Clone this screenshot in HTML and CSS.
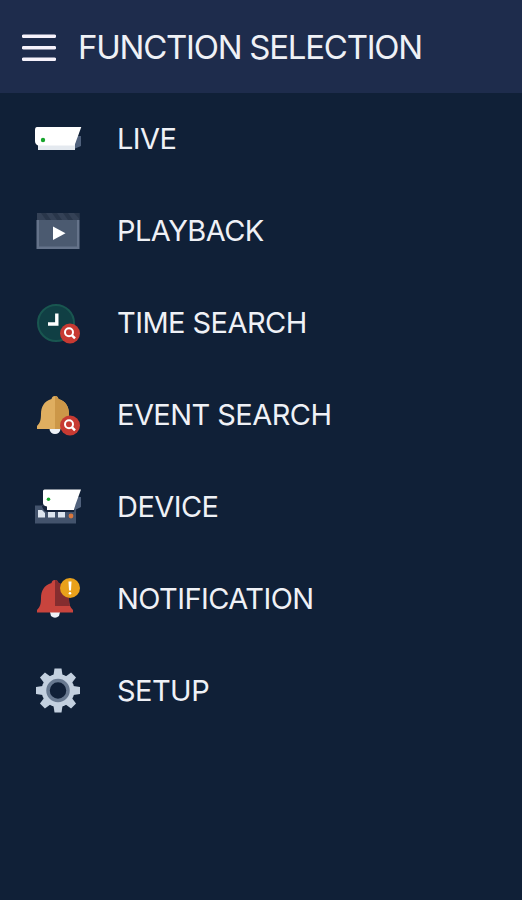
FILE: index.html
```html
<!DOCTYPE html>
<html lang="en">
<head>
    <meta charset="UTF-8">
    <title>Function selection</title>
    <link rel="stylesheet" href="styles.css">
</head>
<body>

<header class="topbar">
    <svg class="menu-btn" width="34" height="30" viewBox="0 0 34 30">
        <path d="M1.5 3.2H32.5M1.5 14.800H32.5M1.5 26.3H32.5" stroke="#f6f2fb" stroke-width="3.4" stroke-linecap="round"/>
    </svg>
    <h1 class="title">FUNCTION SELECTION</h1>
</header>

<ul class="menu">
    <li class="item">
        <svg class="icon" viewBox="0 0 52 52">
            <path d="M42 23H49V33L42 36Z" fill="#50617c"/>
            <path d="M6 31H43V37H6Z" fill="#e4e9ef"/>
            <path d="M5 14H49.3L42.5 32.5H6Q3 31 3 28V17Q3 14 5 14Z" fill="#fff"/>
            <circle cx="11" cy="27" r="2.2" fill="#18a52d"/>
        </svg>
        <span>LIVE</span>
    </li>
    <li class="item">
        <svg class="icon" viewBox="0 0 52 52">
            <path d="M5 8H47.5V15H5Z" fill="#344156"/>
            <path d="M9 8H14L19 15H14ZM20 8H25L30 15H25ZM31 8H36L41 15H36ZM42 8H47L47.5 14Z" fill="#29364a"/>
            <path d="M4.5 15H47.5V44H4.5Z" fill="#65738a"/>
            <path d="M7 15H45V41.5H7Z" fill="#4b5a70"/>
            <path d="M21 21.5L33.5 28.3L21 35Z" fill="#fff"/>
        </svg>
        <span>PLAYBACK</span>
    </li>
    <li class="item">
        <svg class="icon" viewBox="0 0 52 52">
            <circle cx="24" cy="26" r="18" fill="#103f44" stroke="#195650" stroke-width="2"/>
            <path d="M24.8 16.5V27H16" fill="none" stroke="#fff" stroke-width="3.4"/>
            <circle cx="38" cy="36.5" r="10" fill="#c73a32"/>
            <circle cx="37" cy="35.3" r="4" fill="none" stroke="#fff" stroke-width="2"/>
            <path d="M40 38.3L43 41.3" stroke="#fff" stroke-width="2.4"/>
        </svg>
        <span>TIME SEARCH</span>
    </li>
    <li class="item">
        <svg class="icon" viewBox="0 0 52 52">
            <circle cx="23" cy="39.5" r="5.5" fill="#edf1f7"/>
            <path d="M23 7C20.5 7 19.8 8.5 19.5 10C12 12 9 18 9 25C9 31 8 34 5 37V40H41V37C38 34 37 31 37 25C37 18 34 12 26.5 10C26.2 8.5 25.5 7 23 7Z" fill="#dfae60"/>
            <path d="M23 7C25.5 7 26.2 8.5 26.5 10C34 12 37 18 37 25C37 31 38 34 41 37V40H23Z" fill="#cc9748"/>
            <circle cx="38" cy="36.5" r="10" fill="#c73a32"/>
            <circle cx="37" cy="35.3" r="4" fill="none" stroke="#fff" stroke-width="2"/>
            <path d="M40 38.3L43 41.3" stroke="#fff" stroke-width="2.4"/>
        </svg>
        <span>EVENT SEARCH</span>
    </li>
    <li class="item">
        <svg class="icon" viewBox="0 0 52 52">
            <path d="M3 24.5H44V42.5H3Z" fill="#43536c"/>
            <path d="M6 29H10L13 32V36.5H6ZM16 31H23V36.5H16ZM26 31H33V36.5H26Z" fill="#dce4ee"/>
            <circle cx="39" cy="35" r="2.4" fill="#d9773d"/>
            <path d="M42 16H49V26L43 29Z" fill="#50617c"/>
            <path d="M10 25H43L42 31H15Q11 30 10 25Z" fill="#142239"/>
            <path d="M12.5 8.5H49L43.5 23.5L42 29H15V25.5Q11 24.5 11 22V10Q11 8.5 12.5 8.5Z" fill="#fff"/>
            <circle cx="16.5" cy="18.3" r="1.8" fill="#18a52d"/>
        </svg>
        <span>DEVICE</span>
    </li>
    <li class="item">
        <svg class="icon" viewBox="0 0 52 52">
            <path d="M18 39H28L27 43Q23 46.5 19 43Z" fill="#edf1f7"/>
            <path d="M23 7C20.5 7 19.8 8.5 19.5 10C12 12 9 18 9 25C9 31 8 34 5 37V39.5H41V37C38 34 37 31 37 25C37 18 34 12 26.5 10C26.2 8.5 25.5 7 23 7Z" fill="#c8443d"/>
            <path d="M23 7C25.5 7 26.2 8.5 26.5 10C34 12 37 18 37 25C37 29 37.3 31 38 33L23 33Z" fill="#852d2f"/>
            <circle cx="38" cy="15" r="10" fill="#e9a11b"/>
            <path d="M36.5 8.5H39.5L39 17.5H37Z" fill="#fff"/>
            <circle cx="38" cy="20.3" r="1.3" fill="#fff"/>
        </svg>
        <span>NOTIFICATION</span>
    </li>
    <li class="item">
        <svg class="icon" viewBox="0 0 52 52">
            <g transform="translate(26 25.5)">
                <g fill="#c3d0df">
                    <path id="teeth" d="M-5 -12L-3.5 -22H3.5L5 -12V12L3.5 22H-3.5L-5 12Z"/>
                    <use href="#teeth" transform="rotate(45)"/>
                    <use href="#teeth" transform="rotate(90)"/>
                    <use href="#teeth" transform="rotate(135)"/>
                    <circle r="16.5"/>
                </g>
                <circle r="10" fill="#102037" stroke="#687990" stroke-width="3.5"/>
            </g>
        </svg>
        <span>SETUP</span>
    </li>
</ul>

</body>
</html>
```

FILE: styles.css
```css
* {
  box-sizing: border-box;
}
body {
  margin: 0;
  min-height: 100vh;
  background: #102037;
  color: #eff1f6;
  font-family: Inter, "Liberation Sans", sans-serif;
}
.topbar {
  display: flex;
  align-items: center;
  gap: 22px;
  height: 93px;
  padding: 0 22px;
  background: #1e2c4c;
}
.menu-btn {
  flex: none;
  margin-top: 2px;
}
.title {
  margin: 0;
  font-size: 33px;
  font-weight: 400;
  letter-spacing: -1.25px;
  white-space: nowrap;
}
.menu {
  margin: 0;
  padding: 0;
  list-style: none;
}
.item {
  display: flex;
  align-items: center;
  gap: 33px;
  height: 92px;
  padding-left: 32px;
  font-size: 29px;
  letter-spacing: -0.55px;
  white-space: nowrap;
}
.item span {
  padding-bottom: 1px;
}
.icon {
  flex: none;
  width: 52px;
  height: 52px;
}
```
